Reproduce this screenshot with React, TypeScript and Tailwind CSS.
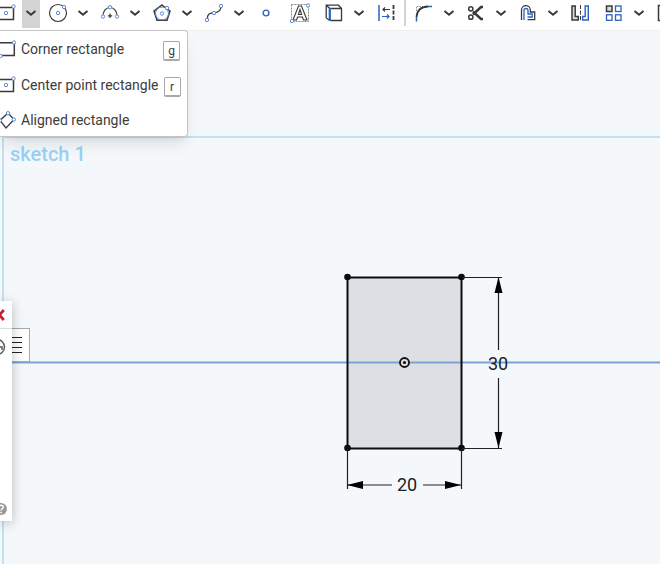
import type { ReactNode } from "react";

const INK = "#3a3a3a";
const BLUE = "#2a62c0";

function Icon({ children }: { children: ReactNode }) {
  return (
    <svg width="20" height="20" viewBox="0 0 20 20" fill="none" stroke={INK} strokeWidth="1.5" className="shrink-0" aria-hidden="true">
      {children}
    </svg>
  );
}

function Dot({ x, y, r = 1.7 }: { x: number; y: number; r?: number }) {
  return <circle cx={x} cy={y} r={r} fill="#fff" stroke="#5a8ad4" strokeWidth="1" />;
}

function CenterRectIcon() {
  return (
    <Icon>
      <path d="M0 4.5H17.5V16.5H0" />
      <Dot x={10} y={10} />
      <Dot x={17.5} y={3.5} />
    </Icon>
  );
}

function CornerRectIcon() {
  return (
    <Icon>
      <path d="M3 3.8H18.3V16.5H3z" />
      <Dot x={18} y={3.5} />
      <Dot x={4.5} y={17} />
    </Icon>
  );
}

function AlignedRectIcon() {
  return (
    <Icon>
      <path d="M12 3L18 9.5L10 18L4 10.5z" strokeWidth="1.3" />
      <Dot x={12} y={3.2} />
      <Dot x={17.8} y={9.5} />
      <Dot x={4} y={10.5} />
    </Icon>
  );
}

function CircleIcon() {
  return (
    <Icon>
      <circle cx="10" cy="10" r="8.5" strokeWidth="1.2" />
      <Dot x={10} y={10} />
      <Dot x={16} y={4} />
    </Icon>
  );
}

function ArcIcon() {
  return (
    <Icon>
      <path d="M3 13C3 8 6 4.5 10 4.5S17 8 17 13" strokeWidth="1.2" />
      <path d="M10 10.5V15M7.8 12.8H12.2" strokeWidth="1.2" />
      <Dot x={10} y={4.2} />
      <Dot x={3} y={13.5} />
      <Dot x={17} y={13.5} />
    </Icon>
  );
}

function PolygonIcon() {
  return (
    <Icon>
      <path d="M10 2L18 8L15 17.3H5L2 8z" />
      <circle cx="10" cy="10.5" r="6.5" stroke="#5a8ad4" strokeWidth="1" />
      <Dot x={10} y={10.5} />
      <Dot x={15} y={5} />
    </Icon>
  );
}

function SplineIcon() {
  return (
    <Icon>
      <path d="M3.5 16C3 9 8 10.5 10 10S17 9 17 4" strokeWidth="1.2" />
      <Dot x={3} y={17} />
      <Dot x={10} y={10} />
      <Dot x={17} y={3} />
    </Icon>
  );
}

function PointIcon() {
  return (
    <Icon>
      <circle cx="10" cy="10" r="2.9" stroke={BLUE} strokeWidth="1.4" />
    </Icon>
  );
}

function TextIcon() {
  return (
    <Icon>
      <rect x="1.5" y="1.5" width="17" height="17" stroke="#888" strokeWidth="1" strokeDasharray="2 1" />
      <path d="M8.5 3H11.5L17 17H13.5L12.4 14H7.6L6.5 17H3zM10 6.5L8.4 11.5H11.6z" fill="#fff" strokeWidth="1.1" />
      <Dot x={18} y={2.5} />
      <Dot x={2} y={18} />
    </Icon>
  );
}

function UseIcon() {
  return (
    <Icon>
      <path d="M6.5 5.5H17.5V17.5H6.5M2.2 15V2.2H14.5L17.5 5.5M2.2 2.2L6 5.5M2.2 15L6 17.5" strokeWidth="1.3" />
      <path d="M5.8 5V18" stroke={BLUE} strokeWidth="2.2" />
    </Icon>
  );
}

function DimensionIcon() {
  return (
    <Icon>
      <path d="M3 2V18" stroke={BLUE} />
      <path d="M17.5 2V18" strokeDasharray="4 1.5" strokeWidth="1.8" />
      <path d="M7 6.5H14M9 4.5L7 6.5L9 8.5" strokeWidth="1.2" />
      <path d="M6 13.5H13M11 11.5L13 13.5L11 15.5" stroke={BLUE} strokeWidth="1.2" />
    </Icon>
  );
}

function FilletIcon() {
  return (
    <Icon>
      <path d="M2.5 8V3.5H9" stroke="#888" strokeWidth="1" strokeDasharray="1.5 1" />
      <path d="M2.5 14C3 8 6.5 3.8 14 3.5" strokeWidth="1.8" />
      <path d="M14 3.5H18M2.5 14V18.5" stroke={BLUE} />
    </Icon>
  );
}

function TrimIcon() {
  return (
    <Icon>
      <path d="M17 4H15L7 11.5M17 16H15L7 8.5" strokeWidth="2.4" />
      <circle cx="4.8" cy="5.8" r="2.1" />
      <circle cx="4.8" cy="14.2" r="2.1" />
    </Icon>
  );
}

function OffsetIcon() {
  return (
    <Icon>
      <path d="M3.5 17V7A4.4 4.4 0 0 1 12.3 7V9H16.7V16.6H9.5" strokeWidth="1.3" />
      <path d="M6 17V7.5A2 2 0 0 1 10 7.5V11H14.2V14H9.5" stroke={BLUE} strokeWidth="1.3" />
    </Icon>
  );
}

function MirrorIcon() {
  return (
    <Icon>
      <path d="M2 3H5.2V13.5H8.3V17H2z" fill="#ddd" />
      <path d="M10.5 2V18" strokeWidth="1" strokeDasharray="4 1.5" />
      <path d="M18.3 3H15.2V13.5H12.6V17H18.3z" stroke={BLUE} strokeWidth="1.4" />
    </Icon>
  );
}

function PatternIcon() {
  return (
    <Icon>
      <rect x="2.5" y="3" width="5.5" height="5.5" fill="#ddd" />
      <rect x="11.5" y="3" width="5.5" height="5.5" stroke={BLUE} strokeWidth="1.3" />
      <rect x="2.5" y="11.8" width="5.5" height="5.5" stroke={BLUE} strokeWidth="1.3" />
      <rect x="11.5" y="11.8" width="5.5" height="5.5" stroke={BLUE} strokeWidth="1.3" />
    </Icon>
  );
}

function TransformIcon() {
  return (
    <Icon>
      <rect x="2.5" y="2.5" width="15" height="15" />
    </Icon>
  );
}

type Tool = { name: string; icon: ReactNode; menu?: boolean; open?: boolean };

const sketchTools: Tool[] = [
  { name: "Center point rectangle", icon: <CenterRectIcon />, menu: true, open: true },
  { name: "Circle", icon: <CircleIcon />, menu: true },
  { name: "Arc", icon: <ArcIcon />, menu: true },
  { name: "Polygon", icon: <PolygonIcon />, menu: true },
  { name: "Spline", icon: <SplineIcon />, menu: true },
  { name: "Point", icon: <PointIcon /> },
  { name: "Text", icon: <TextIcon /> },
  { name: "Use", icon: <UseIcon />, menu: true },
  { name: "Dimension", icon: <DimensionIcon /> },
];

const editTools: Tool[] = [
  { name: "Fillet", icon: <FilletIcon />, menu: true },
  { name: "Trim", icon: <TrimIcon />, menu: true },
  { name: "Offset", icon: <OffsetIcon />, menu: true },
  { name: "Mirror", icon: <MirrorIcon /> },
  { name: "Linear pattern", icon: <PatternIcon />, menu: true },
  { name: "Transform", icon: <TransformIcon /> },
];

const rectangleMenu = [
  { name: "Corner rectangle", icon: <CornerRectIcon />, shortcut: "g" },
  { name: "Center point rectangle", icon: <CenterRectIcon />, shortcut: "r" },
  { name: "Aligned rectangle", icon: <AlignedRectIcon /> },
];

function ToolButton({ tool }: { tool: Tool }) {
  return (
    <div className="flex shrink-0">
      <button type="button" aria-label={tool.name} className="flex h-7 w-[34px] items-center justify-center pb-0.5 pl-0.5">
        {tool.icon}
      </button>
      {tool.menu && (
        <button
          type="button"
          aria-label={`${tool.name} options`}
          aria-expanded={!!tool.open}
          className={`flex h-7 w-[18px] items-center justify-center pb-0.5 ${tool.open ? "bg-[#d4d4d4]" : ""}`}
        >
          <svg width="12" height="8" viewBox="0 0 12 8" fill="none" stroke={INK} strokeWidth="2" aria-hidden="true">
            <path d="M1.5 2L6 5.8L10.5 2" />
          </svg>
        </button>
      )}
    </div>
  );
}

function RectangleMenu() {
  return (
    <ul className="absolute top-[30px] left-0 z-20 w-[188px] rounded-r-sm border border-l-0 border-[#c4c4c4] bg-white shadow-lg">
      {rectangleMenu.map((item) => (
        <li key={item.name}>
          <button
            type="button"
            className={`-ml-1 flex w-[191px] items-center gap-[5px] pr-[7px] text-left text-sm text-[#3c3c3c] ${item.shortcut ? "h-9" : "h-[33px]"}`}
          >
            {item.icon}
            <span className="whitespace-nowrap">{item.name}</span>
            {item.shortcut && (
              <kbd className="mt-1 ml-auto flex h-5 w-[17px] shrink-0 items-center justify-center rounded-xs border border-b-2 border-[#a8a8a8] font-['Roboto',sans-serif] text-xs">
                {item.shortcut}
              </kbd>
            )}
          </button>
        </li>
      ))}
    </ul>
  );
}

function SketchGeometry() {
  return (
    <svg className="absolute inset-0 h-full w-full" role="img" aria-label="Rectangle, 20 by 30">
      <rect x="347.5" y="246.5" width="114" height="171" fill="#dddfe4" />
      <path d="M0 331.5H3000" stroke="#7ba3d6" strokeWidth="2" />
      <rect x="347.5" y="246.5" width="114" height="171" fill="none" stroke="#0c0c0c" strokeWidth="2" />
      {[347.5, 461.5].map((x) =>
        [246, 417].map((y) => <circle key={`${x}-${y}`} cx={x} cy={y} r="3.3" fill="#0c0c0c" />),
      )}
      <circle cx="404.5" cy="331.5" r="4.5" fill="#dddfe4" stroke="#111" strokeWidth="1.8" />
      <circle cx="404.5" cy="331.5" r="1.6" fill="#111" />
      <g stroke="#222" strokeWidth="1.2">
        <path d="M462 246.5H502M462 417.5H502M498.5 247V319M498.5 347V417" />
        <path d="M347.5 418V458M461.5 418V458M348 454H392M423 454H461" />
      </g>
      <path d="M498.5 246L502.5 262H494.5zM498.5 417L502.5 401H494.5zM347 454L363 450V458zM461 454L445 450V458z" fill="#000" />
      <g fill="#222" fontSize="18" textAnchor="middle" fontFamily="Roboto, sans-serif">
        <text x="498" y="339">30</text>
        <text x="407" y="460">20</text>
      </g>
    </svg>
  );
}

function SketchPanel() {
  return (
    <>
      <button
        type="button"
        aria-label="Feature list"
        className="absolute top-[297px] left-0 flex h-[34px] w-[30px] items-center justify-end border border-[#a8a8a8] bg-white pr-1.5"
      >
        <svg width="12" height="18" viewBox="0 0 12 18" stroke="#222" aria-hidden="true">
          <path d="M0 1.5H11M0 6.5H11M0 11.5H11M0 16.5H11" />
        </svg>
      </button>
      <aside className="absolute top-[270px] left-0 z-10 flex h-[220px] w-3 flex-col overflow-hidden bg-white shadow-[0_2px_12px_rgba(0,0,0,0.25)]">
        <button type="button" aria-label="Cancel sketch" className="flex h-7 items-center border-b border-[#ddd]">
          <svg width="12" height="12" viewBox="0 0 12 12" stroke="#c41f35" strokeWidth="2.8" aria-hidden="true">
            <path d="M-5 1L3.8 11M3.8 1L-5 11" />
          </svg>
        </button>
        <button type="button" aria-label="History" className="flex h-9 items-center">
          <svg width="12" height="18" viewBox="0 0 12 18" fill="none" stroke="#555" strokeWidth="1.4" aria-hidden="true">
            <circle cx="-3" cy="9" r="7.5" />
            <path d="M-1 9H2V12" />
          </svg>
        </button>
        <button type="button" aria-label="Help" className="mt-auto flex h-6 items-center">
          <svg width="12" height="14" viewBox="0 0 12 14" aria-hidden="true">
            <circle cx="1" cy="7" r="6" fill="#999" />
            <path d="M-1 5.5C-1 2.5 3.2 2.8 3.2 5.2C3.2 6.8 1.2 6.8 1.2 8.5M1.2 9.8V11.2" fill="none" stroke="#fff" strokeWidth="1.5" />
          </svg>
        </button>
      </aside>
    </>
  );
}

export default function App() {
  return (
    <div className="relative flex min-h-screen flex-col overflow-hidden bg-[#f4f8fb] font-['Roboto',sans-serif]">
      <header className="flex h-[31px] items-start overflow-hidden border-b border-[#f0f0f0] bg-white">
        <div className="-ml-3 flex shrink-0">
          {sketchTools.map((tool) => (
            <ToolButton key={tool.name} tool={tool} />
          ))}
          <div className="ml-0.5 h-[26px] w-0.5 bg-[#d4d4d4]" />
          {editTools.map((tool) => (
            <ToolButton key={tool.name} tool={tool} />
          ))}
        </div>
      </header>
      <RectangleMenu />
      <main className="relative flex flex-1 flex-col pt-[105px] pl-0.5">
        <div className="flex-1 border-t-2 border-l-2 border-[#c0e2f3] px-1.5 pt-1">
          <h1 className="text-xl leading-6 font-medium text-[#98d2f2]">sketch 1</h1>
        </div>
        <SketchGeometry />
        <SketchPanel />
      </main>
    </div>
  );
}
